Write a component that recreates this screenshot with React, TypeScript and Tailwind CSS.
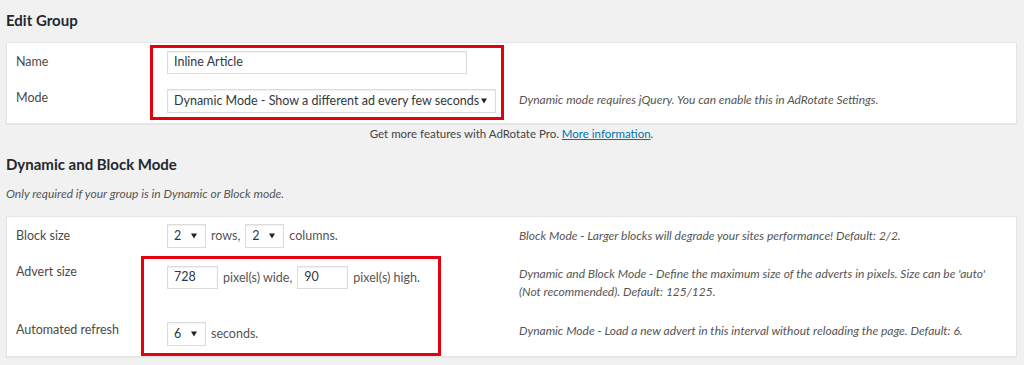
import React from "react";

const font = { fontFamily: 'Lato, "Open Sans", sans-serif' };

function Arrow() {
  return (
    <svg width="6" height="6" viewBox="0 0 6 6" className="shrink-0">
      <path d="M0 0.5 L6 0.5 L3 5.5 Z" fill="#222" />
    </svg>
  );
}

function Select({ value, w }: { value: string; w: string }) {
  return (
    <div
      className={`${w} h-[24px] flex items-center justify-between bg-white border border-[#dcdcdc] pl-[6px] pr-[8px] text-[12.5px] text-[#32373c] shadow-[inset_0_1px_2px_rgba(0,0,0,0.07)]`}
    >
      <span className="whitespace-nowrap">{value}</span>
      <Arrow />
    </div>
  );
}

function Input({ value, w }: { value: string; w: string }) {
  return (
    <div
      className={`${w} h-[23px] flex items-center bg-white border border-[#dcdcdc] px-[6px] text-[12.5px] text-[#32373c] shadow-[inset_0_1px_2px_rgba(0,0,0,0.07)]`}
    >
      {value}
    </div>
  );
}

const label = "pl-[9px] text-[12.5px] leading-[18px] text-[#4a4a4a]";
const desc = "text-[12px] leading-[18px] italic text-[#555]";
const mid = "text-[12.5px] text-[#555]";

export default function App() {
  return (
    <div className="w-[1024px] h-[365px] bg-[#f1f1f1] overflow-hidden" style={font}>
      <div className="w-[1011px] ml-[6px]">
        <h2 className="pt-[9px] h-[42px] text-[15px] font-bold text-[#23282d] leading-[22px]">Edit Group</h2>

        <div className="relative bg-white border border-[#e5e5e5] shadow-[0_1px_1px_rgba(0,0,0,0.04)] h-[82px]">
          <div className="grid grid-cols-[150px_362px_1fr]">
            <div className={`${label} h-[39px] pt-[10px]`}>Name</div>
            <div className="pt-[8px] pl-[10px]">
              <Input value="Inline Article" w="w-[300px]" />
            </div>
            <div />
            <div className={`${label} h-[41px] pt-[7px]`}>Mode</div>
            <div className="pt-[7px] pl-[10px]">
              <Select value="Dynamic Mode - Show a different ad every few seconds" w="w-[329px]" />
            </div>
            <div className={`${desc} pt-[9px]`}>Dynamic mode requires jQuery. You can enable this in AdRotate Settings.</div>
          </div>
          <div className="absolute left-[143px] top-[2px] w-[354px] h-[75px] border-[3px] border-[#e3000f]" />
        </div>

        <p className="text-center text-[11.5px] text-[#444] leading-[18px] pt-[1px] h-[27px]">
          Get more features with AdRotate Pro. <span className="text-[#0073aa] underline">More information</span>.
        </p>

        <h2 className="pt-[2px] h-[33px] text-[15px] font-bold text-[#23282d] leading-[22px]">Dynamic and Block Mode</h2>
        <p className="text-[12px] italic text-[#555] leading-[18px] h-[32px] pt-[1px]">
          Only required if your group is in Dynamic or Block mode.
        </p>

        <div className="relative bg-white border border-[#e5e5e5] shadow-[0_1px_1px_rgba(0,0,0,0.04)] h-[141px]">
          <div className="grid grid-cols-[150px_362px_1fr]">
            <div className={`${label} h-[39px] pt-[10px]`}>Block size</div>
            <div className="pt-[7px] pl-[10px] flex items-center gap-[5px] h-[31px]">
              <Select value="2" w="w-[39px]" />
              <span className={mid}>rows,</span>
              <Select value="2" w="w-[39px]" />
              <span className={mid}>columns.</span>
            </div>
            <div className={`${desc} pt-[10px]`}>Block Mode - Larger blocks will degrade your sites performance! Default: 2/2.</div>

            <div className={`${label} h-[56px] pt-[7px]`}>Advert size</div>
            <div className="pt-[10px] pl-[10px] flex items-start gap-[5px]">
              <Input value="728" w="w-[51px]" />
              <span className={`${mid} leading-[23px]`}>pixel(s) wide,</span>
              <Input value="90" w="w-[51px]" />
              <span className={`${mid} leading-[23px]`}>pixel(s) high.</span>
            </div>
            <div className={`${desc} pt-[9px] w-[475px]`}>
              Dynamic and Block Mode - Define the maximum size of the adverts in pixels. Size can be 'auto' (Not recommended). Default: 125/125.
            </div>

            <div className={`${label} h-[45px] pt-[9px]`}>Automated refresh</div>
            <div className="pt-[10px] pl-[10px] flex items-center gap-[5px] h-[34px]">
              <Select value="6" w="w-[39px]" />
              <span className={mid}>seconds.</span>
            </div>
            <div className={`${desc} pt-[10px]`}>Dynamic Mode - Load a new advert in this interval without reloading the page. Default: 6.</div>
          </div>
          <div className="absolute left-[134px] top-[39px] w-[300px] h-[100px] border-[3px] border-[#e3000f]" />
        </div>
      </div>
    </div>
  );
}
